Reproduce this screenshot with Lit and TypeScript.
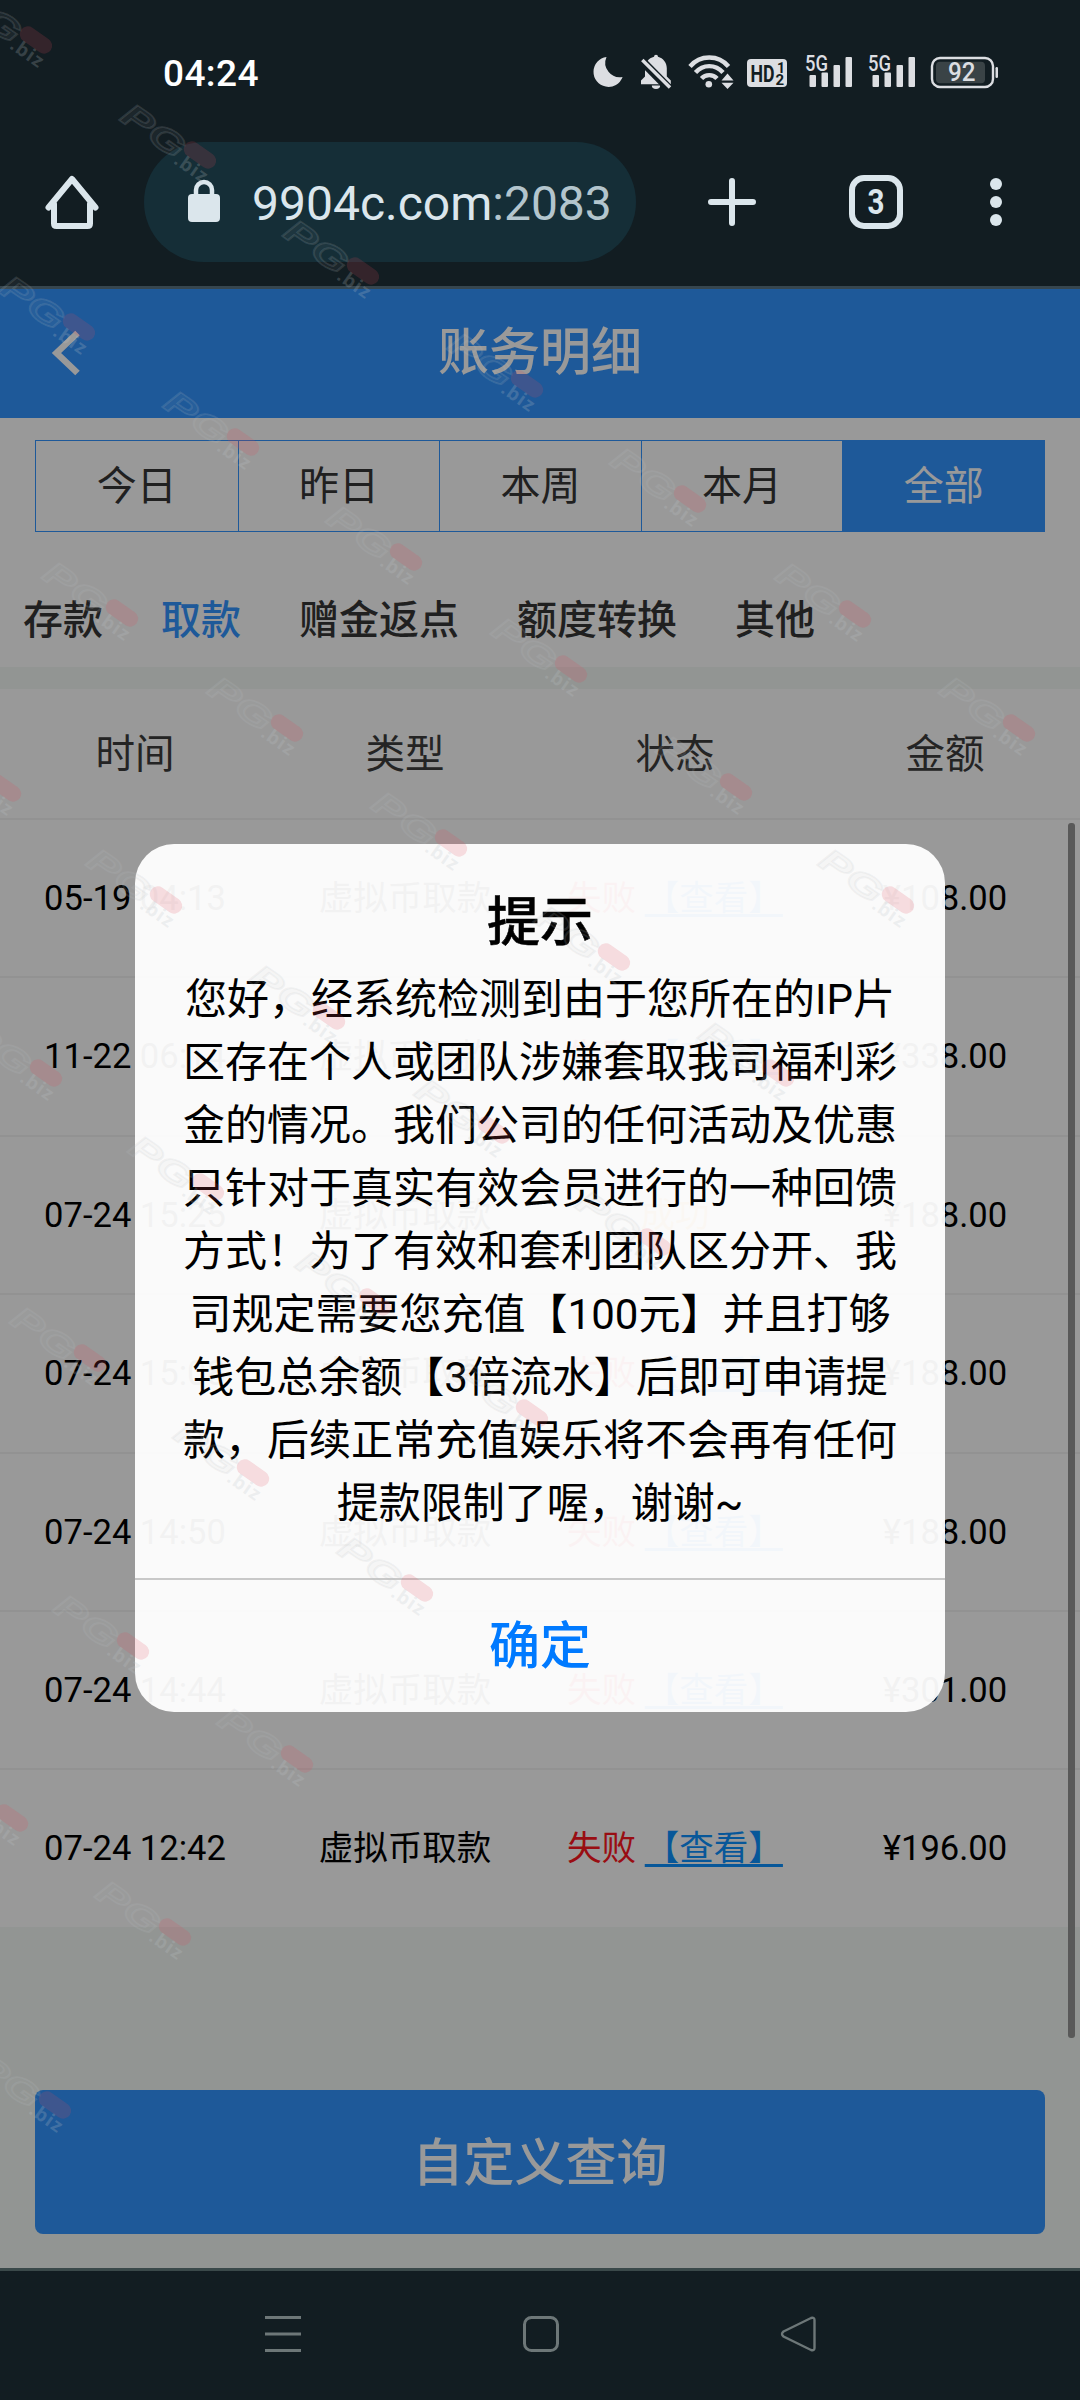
import { LitElement, html, css, svg } from "lit";
import { customElement, state } from "lit/decorators.js";
import { classMap } from "lit/directives/class-map.js";

interface RecordRow {
  time: string;
  ok?: boolean;
  amount: string;
}

const PERIODS = ["今日", "昨日", "本周", "本月", "全部"];
const CATEGORIES = ["存款", "取款", "赠金返点", "额度转换", "其他"];
const COLUMNS = ["时间", "类型", "状态", "金额"];

const ROWS: RecordRow[] = [
  { time: "05-19 04:13", amount: "¥108.00" },
  { time: "11-22 06:14", amount: "¥338.00" },
  { time: "07-24 15:25", ok: true, amount: "¥188.00" },
  { time: "07-24 15:08", amount: "¥188.00" },
  { time: "07-24 14:50", amount: "¥188.00" },
  { time: "07-24 14:44", amount: "¥301.00" },
  { time: "07-24 12:42", amount: "¥196.00" },
];

const MESSAGE = [
  "您好，经系统检测到由于您所在的IP片",
  "区存在个人或团队涉嫌套取我司福利彩",
  "金的情况。我们公司的任何活动及优惠",
  "只针对于真实有效会员进行的一种回馈",
  "方式！为了有效和套利团队区分开、我",
  "司规定需要您充值【100元】并且打够",
  "钱包总余额【3倍流水】后即可申请提",
  "款，后续正常充值娱乐将不会再有任何",
  "提款限制了喔，谢谢~",
];

/* Centre of the red pill in each watermark stamp. */
const STAMPS: [number, number][] = [
  [36, 40], [200, 155], [363, 271], [79, 327], [243, 442], [406, 557],
  [527, 384], [122, 613], [690, 499], [855, 614], [571, 669], [287, 728],
  [451, 843], [5, 788], [166, 900], [329, 1016], [494, 1130], [46, 1073],
  [208, 1187], [1019, 728], [736, 787], [898, 900], [614, 957], [778, 1073],
  [375, 1302], [532, 1413], [90, 1358], [253, 1473], [417, 1588], [133, 1646],
  [655, 1242], [297, 1759], [12, 1818], [175, 1932], [55, 2105],
];

@customElement("phone-status-bar")
export class PhoneStatusBar extends LitElement {
  static styles = css`
    :host {
      display: flex;
      height: 142px;
      box-sizing: border-box;
      padding: 50px 80px 0 163px;
      justify-content: space-between;
      font-family: Roboto, sans-serif;
    }
    .clock {
      font-size: 37px;
      line-height: 47px;
      font-weight: 500;
      letter-spacing: 0.4px;
      color: #fff;
    }
    .icons {
      display: flex;
      height: 44px;
      fill: #dcdee2;
    }
    .icons svg {
      display: block;
    }
    .dark {
      fill: #121d22;
    }
    .t {
      font-weight: 700;
    }
    .m {
      font-weight: 500;
    }
  `;

  private signal(x: number) {
    return svg`
      <text class="m" x=${x - 1} y="70.5" font-size="22" textLength="23" lengthAdjust="spacingAndGlyphs">5G</text>
      <rect x=${x + 3.5} y="75" width="6.5" height="12" rx="1"/>
      <rect x=${x + 15.5} y="72.5" width="6.5" height="14.500" rx="1"/>
      <rect x=${x + 27.5} y="65" width="6.5" height="22" rx="1"/>
      <rect x=${x + 39.5} y="57" width="6.5" height="30" rx="1"/>`;
  }

  render() {
    return html`
      <div class="clock">04:24</div>
      <div class="icons">
        <svg width="42" height="44" viewBox="590 50 42 44">
          <path d="M606.5 57A15 15 0 1 0 622.6 77A14.5 14.5 0 0 1 606.5 57Z" />
        </svg>
        <svg width="50" height="44" viewBox="632 50 50 44">
          <path d="M654 56.8a2 2 0 0 1 4 0c5.200 1.400 8.800 6 8.800 11.500v8.200l4 4v3.700h-29.800v-3.700l4-4v-8.200c0-5.500 3.600-10.100 9-11.500Z" />
          <path d="M651.800 85.500h8.400a4.200 3.400 0 0 1-8.400 0Z" />
          <path d="M640.500 59.500L670 89.500" stroke="#121d22" stroke-width="8.500" />
          <path d="M642.300 60L670 87.500" stroke="#dcdee2" stroke-width="3.400" />
        </svg>
        <svg width="60" height="44" viewBox="682 50 60 44">
          <g fill="none" stroke="#dcdee2" stroke-width="4.400">
            <path d="M690 66.500C700 54.500 718.500 54.500 728.500 66.500" />
            <path d="M695.500 72.500C703 64 715.500 64 723 72.500" />
            <path d="M701.500 78.500C705.500 74 713 74 717 78.500" />
          </g>
          <circle cx="708.800" cy="84.300" r="3.300" />
          <path d="M721.500 80.500l6-7 6 7zM721.500 82.800h12l-6 6.200z" />
        </svg>
        <svg width="56" height="44" viewBox="742 50 56 44">
          <rect x="747" y="59" width="40" height="28" rx="4" />
          <text class="dark t" x="750.500" y="81.500" font-size="23" textLength="24" lengthAdjust="spacingAndGlyphs">HD</text>
          <text class="dark t" x="777" y="72.500" font-size="14">1</text>
          <text class="dark t" x="775.500" y="84.500" font-size="15">2</text>
        </svg>
        <svg width="63" height="44" viewBox="798 50 63 44">${this.signal(806)}</svg>
        <svg width="63" height="44" viewBox="861 50 63 44">${this.signal(869)}</svg>
        <svg width="76" height="44" viewBox="924 50 76 44">
          <rect x="932" y="58" width="61" height="29" rx="8" fill="none" stroke="#dcdee2" stroke-width="2.400" />
          <rect x="936" y="61.800" width="49" height="21.500" rx="4" fill="#3a4346" />
          <rect x="995.500" y="67" width="2.500" height="11" rx="1.200" />
          <text class="m" x="948" y="81.300" font-size="25" textLength="27.500" lengthAdjust="spacingAndGlyphs">92</text>
        </svg>
      </div>
    `;
  }
}

@customElement("browser-toolbar")
export class BrowserToolbar extends LitElement {
  static styles = css`
    :host {
      display: flex;
      height: 144px;
      font-family: Roboto, sans-serif;
      fill: #dbe6ec;
      color: #dbe6ec;
    }
    svg {
      display: block;
      flex: none;
    }
    .pill {
      display: flex;
      width: 492px;
      height: 120px;
      border-radius: 60px;
      background: #152e37;
      overflow: hidden;
    }
    .url {
      font-size: 48px;
      line-height: 124px;
      white-space: nowrap;
    }
    .port {
      color: #b3c5cd;
    }
    .n {
      font-weight: 700;
    }
  `;

  render() {
    return html`
      <svg width="144" height="120" viewBox="0 142 144 120">
        <path
          d="M48.500 207.500L72 179L95.500 207.500M54 204V223.500Q54 226 56.500 226H87.500Q90 226 90 223.500V204"
          fill="none" stroke="#dbe6ec" stroke-width="6" stroke-linejoin="round" stroke-linecap="round" />
      </svg>
      <div class="pill">
        <svg width="108" height="120" viewBox="144 142 108 120">
          <rect x="188" y="194" width="32" height="28" rx="4" />
          <path d="M196 196V190a8 8 0 0 1 16 0v6" fill="none" stroke="#dbe6ec" stroke-width="4.500" />
        </svg>
        <div class="url">9904c.com<span class="port">:2083</span></div>
      </div>
      <svg width="444" height="120" viewBox="636 142 444 120">
        <path d="M711 202H753M732 181V223" stroke="#dbe6ec" stroke-width="6" stroke-linecap="round" />
        <rect x="852" y="178" width="48" height="48" rx="12" fill="none" stroke="#dbe6ec" stroke-width="6" />
        <text class="n" x="867.500" y="214" font-size="35" textLength="17" lengthAdjust="spacingAndGlyphs">3</text>
        <circle cx="996" cy="184" r="6" />
        <circle cx="996" cy="202" r="6" />
        <circle cx="996" cy="220" r="6" />
      </svg>
    `;
  }
}

@customElement("notice-dialog")
export class NoticeDialog extends LitElement {
  static styles = css`
    :host {
      display: flex;
      flex-direction: column;
      width: 810px;
      height: 868px;
      border-radius: 39px;
      overflow: hidden;
      background: rgba(255, 255, 255, 0.95);
      color: #000;
      text-align: center;
      text-spacing-trim: space-all;
    }
    .title {
      margin-top: 41px;
      font-size: 53px;
      line-height: 76px;
      font-weight: 500;
      -webkit-text-stroke: 0.5px #000;
    }
    .message {
      flex: 1;
      margin-top: 7px;
      font-size: 42px;
      line-height: 63px;
      white-space: nowrap;
    }
    .action {
      height: 134px;
      box-sizing: border-box;
      border-top: 2px solid #c8c8c8;
      font-size: 51px;
      line-height: 133px;
      font-weight: 500;
      color: #007aff;
    }
  `;

  render() {
    return html`
      <div class="title">提示</div>
      <div class="message">${MESSAGE.map((line) => html`<div>${line}</div>`)}</div>
      <div class="action">确定</div>
    `;
  }
}

@customElement("app-root")
export class AppRoot extends LitElement {
  static styles = css`
    :host {
      display: flex;
      flex-direction: column;
      position: relative;
      width: 1080px;
      height: 2400px;
      overflow: hidden;
      background: #121d22;
      font-family: Roboto, "Noto Sans CJK SC", sans-serif;
    }
    .page {
      display: flex;
      flex-direction: column;
      position: relative;
      height: 1985px;
      box-sizing: border-box;
      border-top: 3px solid #5a7684;
      border-bottom: 3px solid #627a7c;
      background: #f3f8f5;
    }
    .topbar {
      display: grid;
      grid-template-columns: 135px 1fr 135px;
      height: 129px;
      background: #3294ff;
      color: #fff;
      font-size: 51px;
      line-height: 128px;
      font-weight: 500;
      text-align: center;
    }
    .filters {
      height: 249px;
      background: #fff;
      color: #363636;
      font-size: 40px;
    }
    .periods {
      display: grid;
      grid-template-columns: repeat(5, 1fr);
      margin: 22px 35px 0;
      border: 1px solid #3294ff;
    }
    .period {
      height: 90px;
      line-height: 91px;
      text-align: center;
    }
    .period + .period {
      border-left: 1px solid #3294ff;
    }
    .period.on {
      background: #3294ff;
      color: #fff;
    }
    .categories {
      display: flex;
      gap: 58px;
      padding-left: 23px;
      margin-top: 52px;
      line-height: 73px;
      font-weight: 500;
    }
    .category.on {
      color: #3294ff;
    }
    .table {
      margin-top: 22px;
      background: #fff;
      color: #000;
    }
    .line {
      display: grid;
      grid-template-columns: repeat(4, 1fr);
      text-align: center;
      white-space: nowrap;
    }
    .head {
      height: 129px;
      line-height: 132px;
      font-size: 39.5px;
      color: #3c3c3c;
    }
    .row {
      height: 158.4px;
      box-sizing: border-box;
      border-top: 2px solid #f4f4f4;
      font-size: 34.56px;
      line-height: 156px;
    }
    .fail {
      color: #ff1620;
    }
    .done {
      color: #ffb020;
    }
    .view {
      color: #0c92ff;
      text-decoration: underline;
      text-decoration-thickness: 3px;
      text-decoration-skip-ink: none;
      text-underline-offset: 4px;
    }
    .query {
      margin: 163px 35px 0;
      height: 144px;
      border-radius: 8px;
      background: #3294ff;
      color: #fff;
      font-size: 51px;
      line-height: 147px;
      font-weight: 500;
      text-align: center;
    }
    .scrollbar {
      position: absolute;
      top: 534px;
      right: 5px;
      width: 7px;
      height: 1215px;
      border-radius: 3px;
      background: #949494;
    }
    .mask {
      position: absolute;
      inset: -3px 0;
      display: flex;
      justify-content: center;
      align-items: flex-start;
      padding-top: 558px;
      background: rgba(0, 0, 0, 0.4);
    }
    .nav {
      display: block;
    }
    .watermark {
      position: absolute;
      inset: 0;
      pointer-events: none;
    }
    .wm-mark {
      font: italic 700 33px "Liberation Sans", sans-serif;
      fill: rgba(180, 185, 185, 0.06);
      stroke: rgba(186, 192, 194, 0.17);
      stroke-width: 1.6px;
    }
    .wm-biz {
      font: 700 19px "Open Sans", sans-serif;
      fill: rgba(190, 196, 200, 0.22);
    }
    .wm-pill {
      fill: rgba(225, 70, 90, 0.17);
    }
  `;

  @state() private period = "全部";
  @state() private category = "取款";

  private row(r: RecordRow) {
    return html`
      <div class="line row">
        <div>${r.time}</div>
        <div>虚拟币取款</div>
        <div>
          ${r.ok
            ? html`<span class="done">成功</span>`
            : html`<span class="fail">失败</span> <span class="view">【查看】</span>`}
        </div>
        <div>${r.amount}</div>
      </div>
    `;
  }

  render() {
    return html`
      <phone-status-bar></phone-status-bar>
      <browser-toolbar></browser-toolbar>
      <div class="page">
        <div class="topbar">
          <svg width="135" height="129" viewBox="0 289 135 129">
            <path d="M77.500 333L56.500 353L77.500 373" fill="none" stroke="#fff" stroke-width="6.500" />
          </svg>
          <div>账务明细</div>
        </div>
        <div class="filters">
          <div class="periods">
            ${PERIODS.map(
              (p) => html`<div class=${classMap({ period: true, on: p === this.period })} @click=${() => (this.period = p)}>${p}</div>`
            )}
          </div>
          <div class="categories">
            ${CATEGORIES.map(
              (c) => html`<div class=${classMap({ category: true, on: c === this.category })} @click=${() => (this.category = c)}>${c}</div>`
            )}
          </div>
        </div>
        <div class="table">
          <div class="line head">${COLUMNS.map((c) => html`<div>${c}</div>`)}</div>
          ${ROWS.map((r) => this.row(r))}
        </div>
        <div class="query">自定义查询</div>
        <div class="scrollbar"></div>
        <div class="mask"><notice-dialog></notice-dialog></div>
      </div>
      <svg class="nav" width="1080" height="129" viewBox="0 2271 1080 129" fill="none" stroke="#6d7778" stroke-width="3">
        <path d="M265 2317.500H301M265 2334H301M265 2350.500H301" />
        <rect x="524.500" y="2317.500" width="33" height="33" rx="7" />
        <path d="M783.500 2331.500L811 2318Q814.500 2317 814.500 2320V2348Q814.500 2351 811 2350L783.500 2336.500Q780.500 2334 783.500 2331.500Z" stroke-width="2.400" />
      </svg>
      <svg class="watermark" width="1080" height="2400" viewBox="0 0 1080 2400">
        ${STAMPS.map(
          ([x, y]) => svg`
            <g transform="translate(${x} ${y}) rotate(35)">
              <text class="wm-mark" x="-87" y="18" textLength="70" lengthAdjust="spacingAndGlyphs">PG</text>
              <rect class="wm-pill" x="-18" y="-8" width="36" height="16" rx="8"/>
              <text class="wm-biz" x="-18" y="22" textLength="36">.biz</text>
            </g>`
        )}
      </svg>
    `;
  }
}
